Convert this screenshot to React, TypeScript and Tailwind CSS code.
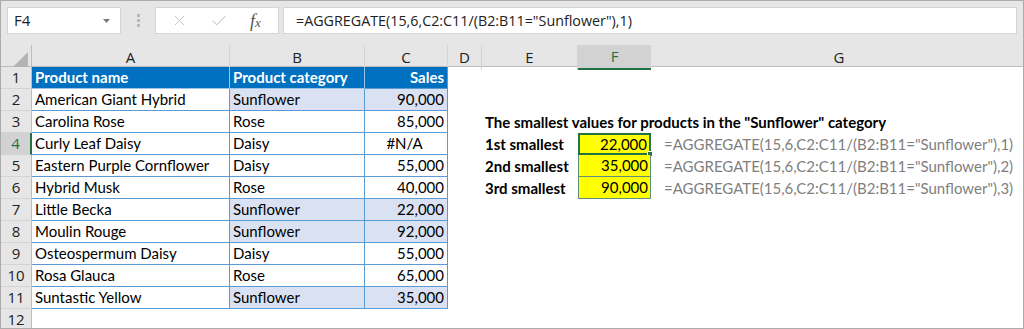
import { X, Check } from "lucide-react";

type Row = { n: number; a: string; b: string; c: string; band?: boolean };

const rows: Row[] = [
  { n: 2, a: "American Giant Hybrid", b: "Sunflower", c: "90,000", band: true },
  { n: 3, a: "Carolina Rose", b: "Rose", c: "85,000" },
  { n: 4, a: "Curly Leaf Daisy", b: "Daisy", c: "#N/A" },
  { n: 5, a: "Eastern Purple Cornflower", b: "Daisy", c: "55,000" },
  { n: 6, a: "Hybrid Musk", b: "Rose", c: "40,000" },
  { n: 7, a: "Little Becka", b: "Sunflower", c: "22,000", band: true },
  { n: 8, a: "Moulin Rouge", b: "Sunflower", c: "92,000", band: true },
  { n: 9, a: "Osteospermum Daisy", b: "Daisy", c: "55,000" },
  { n: 10, a: "Rosa Glauca", b: "Rose", c: "65,000" },
  { n: 11, a: "Suntastic Yellow", b: "Sunflower", c: "35,000", band: true },
];

const results: Record<number, { label: string; value: string; k: number }> = {
  4: { label: "1st smallest", value: "22,000", k: 1 },
  5: { label: "2nd smallest", value: "35,000", k: 2 },
  6: { label: "3rd smallest", value: "90,000", k: 3 },
};

const cols = "grid grid-cols-[31px_198px_135px_83px_34px_96px_73px_1fr]";
const cell = "font-['Lato',sans-serif] text-[15px] text-black leading-none flex items-center";
const tb = "border-[#5b9bd5]";

function RowHead({ n, active }: { n: number; active?: boolean }) {
  return (
    <div
      className={`h-[22px] flex items-center justify-center border-b border-r font-['Open_Sans',sans-serif] text-[15px] ${
        active
          ? "bg-[#d2d2d2] text-[#217346] border-b-[#d2d2d2] border-r-2 border-r-[#217346]"
          : "bg-[#e6e6e6] text-[#222] border-b-[#d4d4d4] border-r-[#bdbdbd]"
      }`}
    >
      {n}
    </div>
  );
}

export default function App() {
  return (
    <div className="w-[1024px] h-[329px] overflow-hidden bg-white border border-[#ababab] flex flex-col">
      {/* formula bar */}
      <div className="h-[44px] shrink-0 bg-[#e6e6e6] flex items-start pt-[6px] pl-[6px]">
        <div className="w-[114px] h-[27px] bg-white border border-[#d4d4d4] flex items-center justify-between pl-[6px] pr-[10px] font-['Open_Sans',sans-serif] text-[15px] text-[#222]">
          F4
          <svg width="7" height="4" viewBox="0 0 7 4"><path d="M0 0h7L3.5 4z" fill="#7a7a7a" /></svg>
        </div>
        <div className="w-[34px] h-[27px] flex flex-col items-center justify-center gap-[2px]">
          <span className="w-[3px] h-[3px] bg-[#b8b8b8]" />
          <span className="w-[3px] h-[3px] bg-[#b8b8b8]" />
          <span className="w-[3px] h-[3px] bg-[#b8b8b8]" />
        </div>
        <div className="w-[124px] h-[27px] bg-white border border-[#d4d4d4] flex items-center pl-[15px]">
          <X size={17} strokeWidth={1.4} className="text-[#c4c4c4]" />
          <Check size={18} strokeWidth={1.4} className="text-[#c4c4c4] ml-[22px]" />
          <span className="ml-[22px] font-['Liberation_Serif',serif] italic text-[18px] text-[#555] leading-none">
            f<span className="text-[13px]">x</span>
          </span>
        </div>
        <div className="ml-[4px] w-[734px] h-[27px] bg-white border border-[#d4d4d4] flex items-center pl-[12px] font-['Open_Sans',sans-serif] text-[14.3px] text-[#222]">
          =AGGREGATE(15,6,C2:C11/(B2:B11="Sunflower"),1)
        </div>
      </div>

      {/* column headers */}
      <div className={`${cols} h-[22px] shrink-0 bg-[#e6e6e6] border-b border-[#bdbdbd] font-['Open_Sans',sans-serif] text-[15px] text-[#222]`}>
        <div className="border-r border-[#bdbdbd] flex items-end justify-end pr-[3px] pb-[3px]">
          <svg width="15" height="15" viewBox="0 0 15 15"><path d="M15 0v15H0z" fill="#b4b4b4" /></svg>
        </div>
        {["A", "B", "C", "D", "E"].map((l) => (
          <div key={l} className="border-r border-[#d4d4d4] flex items-center justify-center">{l}</div>
        ))}
        <div className="bg-[#d2d2d2] border-b-2 border-[#217346] text-[#217346] flex items-center justify-center">F</div>
        <div className="flex items-center justify-center pl-[4px]">G</div>
      </div>

      {/* row 1 */}
      <div className={cols}>
        <RowHead n={1} />
        <div className={`${cell} h-[22px] bg-[#0070c0] font-bold pl-[3px] border-r border-[#9dc3e6] border-b ${tb}`}>
          <span className="text-white">Product name</span>
        </div>
        <div className={`${cell} h-[22px] bg-[#0070c0] font-bold pl-[3px] border-r border-[#9dc3e6] border-b ${tb}`}>
          <span className="text-white">Product category</span>
        </div>
        <div className={`${cell} h-[22px] bg-[#0070c0] font-bold justify-end pr-[3px] border-r border-b ${tb}`}>
          <span className="text-white">Sales</span>
        </div>
        <div />
        <div />
        <div />
        <div />
      </div>

      {rows.map((r) => {
        const res = results[r.n];
        return (
          <div key={r.n} className={cols}>
            <RowHead n={r.n} active={r.n === 4} />
            <div className={`${cell} h-[22px] pl-[3px] border-r border-b ${tb}`}>{r.a}</div>
            <div className={`${cell} h-[22px] pl-[3px] border-r border-b ${tb} ${r.band ? "bg-[#d9e1f2]" : ""}`}>{r.b}</div>
            <div
              className={`${cell} h-[22px] pr-[3px] border-r border-b ${tb} ${r.band ? "bg-[#d9e1f2]" : ""} ${
                r.c === "#N/A" ? "justify-center" : "justify-end"
              }`}
            >
              {r.c}
            </div>
            <div />
            {r.n === 3 ? (
              <div className={`${cell} col-span-3 h-[22px] pl-[3px] font-bold whitespace-nowrap`}>
                The smallest values for products in the "Sunflower" category
              </div>
            ) : res ? (
              <>
                <div className={`${cell} h-[22px] pl-[3px] font-bold whitespace-nowrap`}>{res.label}</div>
                <div
                  className={`relative h-[22px] ${
                    res.k === 1 ? "border-2 border-[#217346]" : "border-x border-b border-[#5f8f78]"
                  } bg-[#ffff00] ${cell} justify-end pr-[2px]`}
                >
                  {res.value}
                  {res.k === 1 && (
                    <span className="absolute -right-[4px] -bottom-[4px] w-[6px] h-[6px] bg-[#217346] border border-white" />
                  )}
                </div>
                <div className={`${cell} h-[22px] pl-[13px] whitespace-nowrap`}>
                  <span className="text-[#7f7f7f]">=AGGREGATE(15,6,C2:C11/(B2:B11="Sunflower"),{res.k})</span>
                </div>
              </>
            ) : (
              <>
                <div />
                <div />
                <div />
              </>
            )}
          </div>
        );
      })}

      <div className={cols}>
        <RowHead n={12} />
      </div>
    </div>
  );
}
